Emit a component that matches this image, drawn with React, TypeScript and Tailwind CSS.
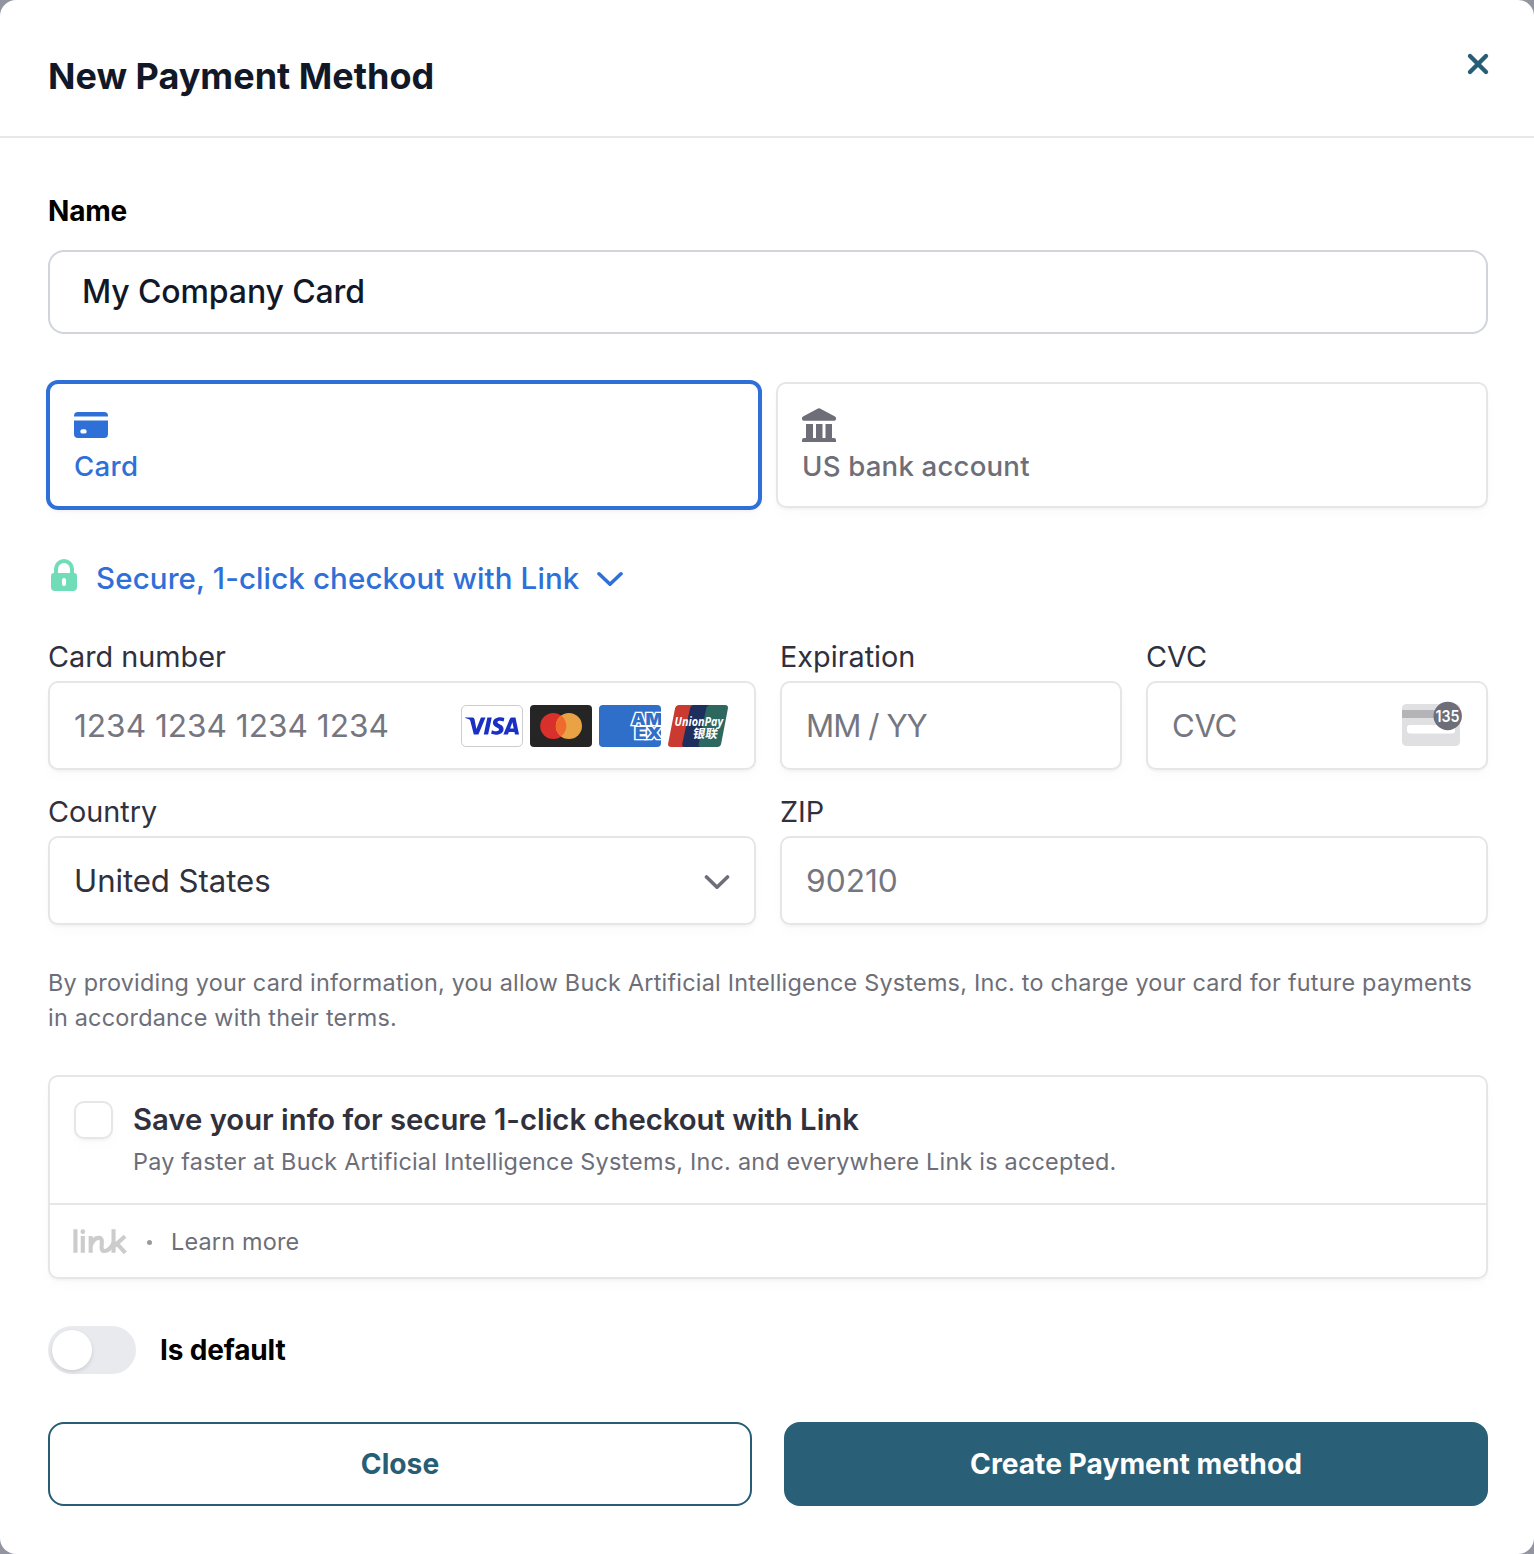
import React from "react";
import { SiVisa } from "react-icons/si";

const field =
  "flex h-[89px] items-center rounded-[10px] border-2 border-[#e6e6e6] bg-white px-6 shadow-[0_2px_2px_rgba(0,0,0,0.03),0_6px_12px_rgba(0,0,0,0.02)]";

function Label({ children }: { children: React.ReactNode }) {
  return (
    <div className="h-[49px] text-[28.8px] leading-[50px] text-[#30313d]">{children}</div>
  );
}

function VisaCard() {
  return (
    <div className="flex h-[42px] w-[62px] items-center justify-center rounded-[5px] border border-[#cccccc] bg-white">
      <SiVisa className="h-[54px] w-[54px] shrink-0 text-[#1a2fc4]" />
    </div>
  );
}

function MastercardCard() {
  return (
    <svg className="h-[42px] w-[62px]" viewBox="0 0 62 42">
      <rect width="62" height="42" rx="4" fill="#252525" />
      <circle cx="23.3" cy="21" r="13.1" fill="#d9302b" />
      <circle cx="38.9" cy="21" r="13.1" fill="#eaa344" />
      <path d="M31.1 10.5a13.1 13.1 0 0 1 0 21a13.1 13.1 0 0 1 0-21z" fill="#ee6b2d" />
    </svg>
  );
}

function AmexCard() {
  return (
    <svg className="h-[42px] w-[62px] overflow-hidden rounded-[4px]" viewBox="0 0 62 42">
      <rect width="62" height="42" fill="#306fc9" />
      <text
        fontFamily="Inter, sans-serif"
        fontWeight="900"
        fontSize="15.400"
        fill="#306fc9"
        stroke="#ffffff"
        strokeWidth="2.600"
        strokeLinejoin="miter"
        paintOrder="stroke"
      >
        <tspan x="32.400" y="20" textLength="31" lengthAdjust="spacingAndGlyphs">AM</tspan>
        <tspan x="35.800" y="34" textLength="27" lengthAdjust="spacingAndGlyphs">EX</tspan>
      </text>
    </svg>
  );
}

function UnionPayCard() {
  return (
    <svg className="h-[42px] w-[62px] overflow-visible" viewBox="0 0 62 42">
      <path d="M11.2 0H30L21.5 42H3.2Q-.6 42 .2 38.200L7 3.500Q7.800 0 11.200 0z" fill="#cb3a30" />
      <path d="M26 0H44L35 42H17Q13.500 42 14.300 38.400L22 3.500Q22.800 0 26 0z" fill="#1e2f5d" />
      <path d="M42 0H57Q60.600 0 59.900 3.600L53.200 38.500Q52.500 42 49 42H33Q30 42 30.800 38.500L38.200 3.500Q39 0 42 0z" fill="#2c6860" />
      <text
        x="6.5"
        y="20.6"
        fontFamily="Open Sans, sans-serif"
        fontWeight="700"
        fontStyle="italic"
        fontSize="12.600"
        fill="#ffffff"
        textLength="48.500"
        lengthAdjust="spacingAndGlyphs"
      >
        UnionPay
      </text>
      <text
        transform="translate(24.300 33.200) skewX(-10)"
        fontFamily="Noto Sans CJK SC, sans-serif"
        fontWeight="700"
        fontSize="12.400"
        fill="#ffffff"
      >
        银联
      </text>
    </svg>
  );
}

function CvcIcon() {
  return (
    <svg className="-mt-[3px] h-[48px] w-[62px]" viewBox="0 0 62 48">
      <rect x="2" y="4" width="58" height="42" rx="4.500" fill="#e0e0e2" />
      <rect x="2" y="10" width="58" height="8" fill="#b3b3b8" />
      <rect x="7" y="25" width="48" height="8.500" rx="3" fill="#ffffff" />
      <circle cx="47.700" cy="16" r="14.200" fill="#6d6e78" />
      <text
        x="47.500"
        y="21.500"
        textAnchor="middle"
        fontFamily="Inter, sans-serif"
        fontWeight="600"
        fontSize="15.500"
        fill="#ffffff"
        textLength="24"
        lengthAdjust="spacingAndGlyphs"
      >
        135
      </text>
    </svg>
  );
}

function LinkLogo() {
  return (
    <svg className="mt-px h-[28px] w-[55px]" viewBox="0 0 56 28" fill="none" stroke="#cccccc" strokeWidth="4.200">
      <path d="M3.500 1V25M11 8V25" />
      <circle cx="11" cy="3.500" r="2.400" fill="#cccccc" stroke="none" />
      <path d="M19 8V25M19 18C21 12.500 24.500 9.500 27.500 9.800C30.500 10.100 30.700 13 30.300 16C29.900 20 29.700 23.200 33 23.200C37 23.200 40 19.500 42.300 15" />
      <path d="M42.300 1V25M54 8.200L43 18.200M45.500 15.500L54.300 25" />
    </svg>
  );
}

export default function App() {
  return (
    <div className="h-[1554px] w-[1534px] bg-[#9294a0] font-['Inter',sans-serif]">
      <div className="flex h-full flex-col overflow-hidden rounded-[16px] bg-white">
        <header className="flex h-[138px] shrink-0 justify-between border-b-2 border-[#e5e7eb] pl-12 pr-[46px]">
          <h1 className="pt-[52px] text-[36px] font-[750] leading-[48px] text-[#111827]">
            New Payment Method
          </h1>
          <button aria-label="Dismiss" className="mt-[54px] h-5 w-5">
            <svg viewBox="0 0 20 20" className="h-5 w-5 overflow-visible" stroke="#285e75" strokeWidth="4.400" strokeLinecap="round">
              <path d="M2 2L18 18M18 2L2 18" />
            </svg>
          </button>
        </header>

        <main className="flex flex-col px-12 pr-[46px] pt-12">
          <label className="h-16 text-[28px] font-bold leading-[50px] tracking-[-0.200px] text-black">Name</label>
          <div className="flex h-[84px] items-center rounded-[16px] border-2 border-[#d1d5db] px-8 text-[32px] font-medium tracking-[-0.120px] text-[#111827]">
            My Company Card
          </div>

          <div className="mt-[46px] -ml-0.5 flex gap-3.5">
            <div className="h-[130px] w-[716px] rounded-[12px] border-4 border-[#2f6fd8] px-6 pt-6 text-[#2f6fd8] shadow-[0_2px_2px_rgba(0,0,0,0.03),0_6px_12px_rgba(0,0,0,0.02)]">
              <svg className="mt-1 h-[26px] w-[34px]" viewBox="0 0 34 26" fill="currentColor">
                <path d="M0 4.500V4Q0 0 4 0H30Q34 0 34 4V4.500z" />
                <path fillRule="evenodd" d="M0 8.500H34V22Q34 26 30 26H4Q0 26 0 22zM8.500 17.200a2.200 2.200 0 0 0 0 4.400h2a2.200 2.200 0 0 0 0-4.400z" />
              </svg>
              <div className="mt-2 text-[27.600px] font-[550] leading-[41px] tracking-[0.300px]">Card</div>
            </div>
            <div className="mt-0.5 h-[126px] w-[712px] rounded-[10px] border-2 border-[#e6e6e6] px-6 pt-6 text-[#6d6e78] shadow-[0_2px_2px_rgba(0,0,0,0.03),0_6px_12px_rgba(0,0,0,0.02)]">
              <svg className="h-[34px] w-[34px]" viewBox="0 0 34 34" fill="currentColor">
                <path d="M0 10.200Q0 9 1 8.400L16 .4Q17 -.1 18 .4L33 8.400Q34 9 34 10.200V11Q34 12.700 32.300 12.700H1.700Q0 12.700 0 11z" />
                <path d="M4 16H11V30H14V16H20.500V30H23.500V16H30V30H32Q34 30 34 32V34H0V32Q0 30 2 30H4z" />
              </svg>
              <div className="mt-1 text-[27.600px] font-[550] leading-[41px] tracking-[0.200px]">US bank account</div>
            </div>
          </div>

          <div className="mt-[44px] flex h-12 items-center text-[#2f6fd8]">
            <svg className="ml-[3px] mt-[-6px] h-8 w-[26px]" viewBox="0 0 26 32">
              <path d="M5 16V10a8 8 0 0 1 16 0V16" fill="none" stroke="#70dcb8" strokeWidth="4" />
              <path fillRule="evenodd" fill="#70dcb8" d="M3 14H23Q26 14 26 17V28Q26 32 22 32H4Q0 32 0 28V17Q0 14 3 14zM13 19a2 2 0 0 0-2 2v4a2 2 0 0 0 4 0v-4a2 2 0 0 0-2-2z" />
            </svg>
            <span className="ml-[19px] text-[29.500px] font-[550] tracking-[0.120px]">Secure, 1-click checkout with Link</span>
            <svg className="ml-[18px] mt-0.5 h-4 w-[26px]" viewBox="0 0 26 16" fill="none" stroke="currentColor" strokeWidth="3.600" strokeLinecap="round" strokeLinejoin="round">
              <path d="M2 2.800L13 13.200L24 2.800" />
            </svg>
          </div>

          <div className="mt-[30px] flex gap-6">
            <div className="w-[708px]">
              <Label>Card number</Label>
              <div className={field}>
                <span className="flex-1 text-[31.600px] text-[#757680]">1234 1234 1234 1234</span>
                <div className="flex gap-[7px]">
                  <VisaCard />
                  <MastercardCard />
                  <AmexCard />
                  <UnionPayCard />
                </div>
              </div>
            </div>
            <div className="w-[342px]">
              <Label>Expiration</Label>
              <div className={field}>
                <span className="mt-0.5 text-[31.200px] tracking-[-0.950px] text-[#757680]">MM / YY</span>
              </div>
            </div>
            <div className="w-[342px]">
              <Label>CVC</Label>
              <div className={field}>
                <span className="mt-0.5 flex-1 text-[31.200px] tracking-[-0.400px] text-[#757680]">CVC</span>
                <CvcIcon />
              </div>
            </div>
          </div>

          <div className="mt-[17px] flex gap-6">
            <div className="w-[708px]">
              <Label>Country</Label>
              <div className={field}>
                <span className="mt-0.5 flex-1 text-[31.200px] tracking-[-0.080px] text-[#30313d]">United States</span>
                <svg className="mt-0.5 h-4 w-[26px]" viewBox="0 0 26 16" fill="none" stroke="#6d6e78" strokeWidth="3.600" strokeLinecap="round" strokeLinejoin="round">
                  <path d="M2.500 3L13 13.200L23.500 3" />
                </svg>
              </div>
            </div>
            <div className="w-[708px]">
              <Label>ZIP</Label>
              <div className={field}>
                <span className="mt-px text-[31.700px] text-[#757680]">90210</span>
              </div>
            </div>
          </div>

          <p className="mt-10 whitespace-nowrap text-[23.400px] leading-[35px] tracking-[0.225px] text-[#6d6e78]">
            By providing your card information, you allow Buck Artificial Intelligence Systems, Inc. to charge your card for future payments
            <br />
            in accordance with their terms.
          </p>

          <section className="mt-10 h-[204px] rounded-[10px] border-2 border-[#e6e6e6] shadow-[0_2px_2px_rgba(0,0,0,0.03),0_6px_12px_rgba(0,0,0,0.02)]">
            <div className="flex h-[128px] border-b-2 border-[#e6e6e6] pl-6 pt-6">
              <div className="h-[38px] w-[39px] rounded-[10px] border-2 border-[#e6e6e6] shadow-[0_2px_2px_rgba(0,0,0,0.03),0_6px_12px_rgba(0,0,0,0.02)]" />
              <div className="ml-5">
                <div className="text-[29.280px] font-semibold leading-[38px] text-[#30313d]">
                  Save your info for secure 1-click checkout with Link
                </div>
                <div className="mt-1 text-[23.400px] leading-[38px] tracking-[0.220px] text-[#6d6e78]">
                  Pay faster at Buck Artificial Intelligence Systems, Inc. and everywhere Link is accepted.
                </div>
              </div>
            </div>
            <div className="flex h-[72px] items-center pl-[22px] text-[23.400px] tracking-[0.200px] text-[#6d6e78]">
              <LinkLogo />
              <span className="ml-5 mt-[3px] h-[5px] w-[5px] rounded-full bg-[#999aa1]" />
              <span className="ml-[19px] mt-0.5">Learn more</span>
            </div>
          </section>

          <div className="mt-[47px] flex h-12 items-center">
            <div className="flex h-12 w-[88px] items-center rounded-full bg-[#e9eaee] pl-1">
              <div className="h-10 w-10 rounded-full bg-white shadow-[0_2px_4px_rgba(0,0,0,0.12)]" />
            </div>
            <span className="ml-6 text-[28px] font-bold tracking-[-0.150px] text-black">Is default</span>
          </div>

          <div className="mt-12 flex gap-8">
            <button className="h-[84px] w-[704px] rounded-[16px] border-2 border-[#285e75] text-[28.200px] font-bold text-[#285e75]">
              Close
            </button>
            <button className="h-[84px] w-[704px] rounded-[16px] bg-[#2a6077] text-[28.200px] font-bold text-white">
              Create Payment method
            </button>
          </div>
        </main>
      </div>
    </div>
  );
}
